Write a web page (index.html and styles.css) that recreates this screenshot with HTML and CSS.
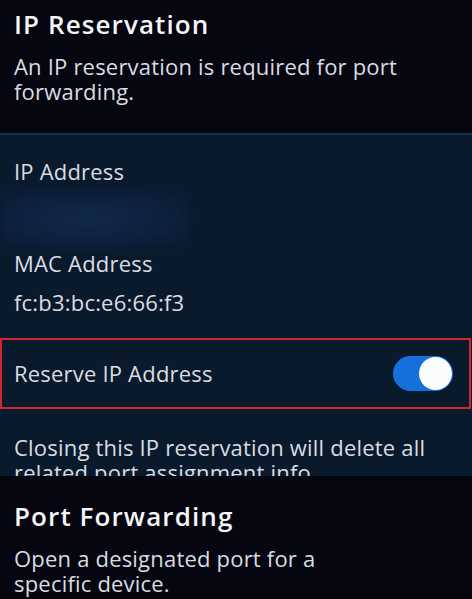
FILE: index.html
```html
<!DOCTYPE html>
<html>
<head>
<meta charset="utf-8">
<link rel="stylesheet" href="styles.css">
</head>
<body>
<section class="intro">
  <h1 class="title">IP Reservation</h1>
  <p class="desc">An IP reservation is required for port forwarding.</p>
</section>
<section class="panel">
  <div class="field">
    <div class="label">IP Address</div>
    <div class="blurred"></div>
  </div>
  <div class="field mac">
    <div class="label">MAC Address</div>
    <div class="value">fc:b3:bc:e6:66:f3</div>
  </div>
  <div class="reserve">
    <span class="label">Reserve IP Address</span>
    <span class="toggle"><span class="knob"></span></span>
  </div>
  <p class="note">Closing this IP reservation will delete all related port assignment info.</p>
</section>
<section class="intro bottom">
  <h1 class="title">Port Forwarding</h1>
  <p class="desc narrow">Open a designated port for a specific device.</p>
</section>
</body>
</html>
```
FILE: styles.css
```css
html, body {
  margin: 0;
  padding: 0;
  background: #05060f;
  color: #e9ecef;
  font-family: "Open Sans", Lato, sans-serif;
  overflow: hidden;
}
.intro {
  padding: 8px 14px 0;
  height: 125px;
}
.title {
  margin: 0;
  font-size: 26px;
  line-height: 32px;
  font-weight: 600;
  letter-spacing: 1.1px;
  color: #f4f5f7;
}
.desc {
  margin: 14px 0 0;
  font-size: 22px;
  line-height: 25px;
  letter-spacing: 0.2px;
  color: #d9dde2;
  width: 440px;
}
.desc.narrow { width: 340px; }
.panel {
  background: #0a1a2d;
  border-top: 2px solid #1c3047;
  height: 341px;
  overflow: hidden;
}
.field {
  padding: 0 14px;
}
.label {
  font-size: 22px;
  line-height: 25px;
  letter-spacing: 0.2px;
  color: #d9dde2;
}
.field:first-child .label { padding-top: 24px; }
.blurred {
  height: 58px;
  margin: 6px 0 0 -14px;
  width: 190px;
  background: radial-gradient(ellipse at 45% 50%, #12294a 0%, #0e2240 45%, #0a1a2d 100%);
  filter: blur(4px);
}
.mac { padding-top: 3px; }
.value {
  font-size: 22px;
  line-height: 25px;
  letter-spacing: 0.2px;
  margin-top: 14px;
  color: #d9dde2;
}
.reserve {
  margin: 23px 1px 0 0;
  height: 67px;
  border: 2px solid #d3252e;
  display: flex;
  align-items: center;
  justify-content: space-between;
  padding: 0 16px 0 12px;
}
.toggle {
  width: 60px;
  height: 35px;
  border-radius: 18px;
  background: #1670dc;
  display: flex;
  align-items: center;
  justify-content: flex-end;
  padding: 1px;
  box-sizing: border-box;
}
.knob {
  width: 33px;
  height: 33px;
  border-radius: 50%;
  background: #fbfcfd;
}
.note {
  margin: 26px 14px 0;
  font-size: 22px;
  line-height: 25px;
  letter-spacing: 0.2px;
  color: #d9dde2;
}
.bottom { padding-top: 24px; }
```
